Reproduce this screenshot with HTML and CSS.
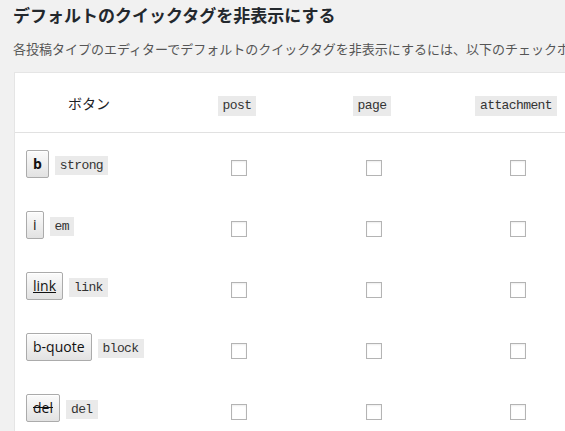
FILE: index.html
```html
<!DOCTYPE html>
<html lang="ja">
<head>
    <meta charset="UTF-8">
    <meta name="viewport" content="width=device-width, initial-scale=1.0">
    <title>クイックタグ設定</title>
    <link rel="stylesheet" href="styles.css">
</head>
<body>
    <h2>デフォルトのクイックタグを非表示にする</h2>
    <p class="desc">各投稿タイプのエディターでデフォルトのクイックタグを非表示にするには、以下のチェックボックスにチェックを入れてください。</p>

    <div class="panel">
        <div class="row head">
            <div class="label-col">ボタン</div>
            <div><code>post</code></div>
            <div><code>page</code></div>
            <div><code>attachment</code></div>
        </div>

        <div class="row">
            <div class="tag-col"><button class="qt qt-b">b</button><code>strong</code></div>
            <div><input type="checkbox" name="hide[post][strong]"></div>
            <div><input type="checkbox" name="hide[page][strong]"></div>
            <div><input type="checkbox" name="hide[attachment][strong]"></div>
        </div>
        <div class="row">
            <div class="tag-col"><button class="qt qt-i">i</button><code>em</code></div>
            <div><input type="checkbox" name="hide[post][em]"></div>
            <div><input type="checkbox" name="hide[page][em]"></div>
            <div><input type="checkbox" name="hide[attachment][em]"></div>
        </div>
        <div class="row">
            <div class="tag-col"><button class="qt qt-link">link</button><code>link</code></div>
            <div><input type="checkbox" name="hide[post][link]"></div>
            <div><input type="checkbox" name="hide[page][link]"></div>
            <div><input type="checkbox" name="hide[attachment][link]"></div>
        </div>
        <div class="row">
            <div class="tag-col"><button class="qt">b-quote</button><code>block</code></div>
            <div><input type="checkbox" name="hide[post][block]"></div>
            <div><input type="checkbox" name="hide[page][block]"></div>
            <div><input type="checkbox" name="hide[attachment][block]"></div>
        </div>
        <div class="row">
            <div class="tag-col"><button class="qt qt-del">del</button><code>del</code></div>
            <div><input type="checkbox" name="hide[post][del]"></div>
            <div><input type="checkbox" name="hide[page][del]"></div>
            <div><input type="checkbox" name="hide[attachment][del]"></div>
        </div>
    </div>
</body>
</html>
```

FILE: styles.css
```css
body {
    margin: 0;
    padding: 0 13px;
    background-color: #f1f1f1;
    color: #444;
    font-family: "Noto Sans CJK JP", "Noto Sans", sans-serif;
    overflow: hidden;
}
h2 {
    margin: 4px 0 0;
    font-size: 17px;
    line-height: 22px;
    font-weight: 700;
    color: #23282d;
    white-space: nowrap;
}
.desc {
    margin: 13px 0 13px;
    font-size: 13px;
    line-height: 20px;
    color: #555;
    white-space: nowrap;
}
.panel {
    width: 600px;
    margin-left: 1px;
    background-color: #fff;
    border: 1px solid #e5e5e5;
}
.row {
    display: grid;
    grid-template-columns: 148px 148px 122px 166px;
    align-items: center;
    height: 61px;
}
.row > div {
    text-align: center;
}
.head {
    box-sizing: border-box;
    height: 60px;
    border-bottom: 1px solid #e1e1e1;
}
.label-col {
    font-size: 14px;
    color: #1d2327;
}
.row > .tag-col {
    display: flex;
    align-items: center;
    gap: 6px;
    padding-left: 11px;
    text-align: left;
}
code {
    display: inline-block;
    box-sizing: border-box;
    height: 20px;
    padding: 0 5px;
    font-family: "Liberation Mono", "DejaVu Sans Mono", monospace;
    font-size: 13px;
    letter-spacing: -0.6px;
    line-height: 20px;
    color: #333;
    background-color: #eaeaea;
}
.tag-col code {
    height: 19px;
    line-height: 20px;
    margin-top: 3px;
}
.qt {
    height: 28px;
    margin: 0;
    padding: 0 6px;
    font-family: "Open Sans", "Noto Sans", sans-serif;
    font-size: 14px;
    color: #111;
    background: linear-gradient(#fbfbfb, #e2e2e2);
    border: 1px solid #ababab;
    border-radius: 2px;
    box-shadow: inset 0 1px 0 #fff;
}
.qt-b {
    font-weight: 700;
}
.qt-link {
    text-decoration: underline;
}
.qt-del {
    text-decoration: line-through;
}
input[type="checkbox"] {
    appearance: none;
    width: 16px;
    height: 16px;
    margin: 4px 0 0 4px;
    vertical-align: middle;
    background-color: #fff;
    border: 1px solid #b4b4b4;
    box-shadow: inset 0 1px 2px rgba(0, 0, 0, 0.07);
}
```
